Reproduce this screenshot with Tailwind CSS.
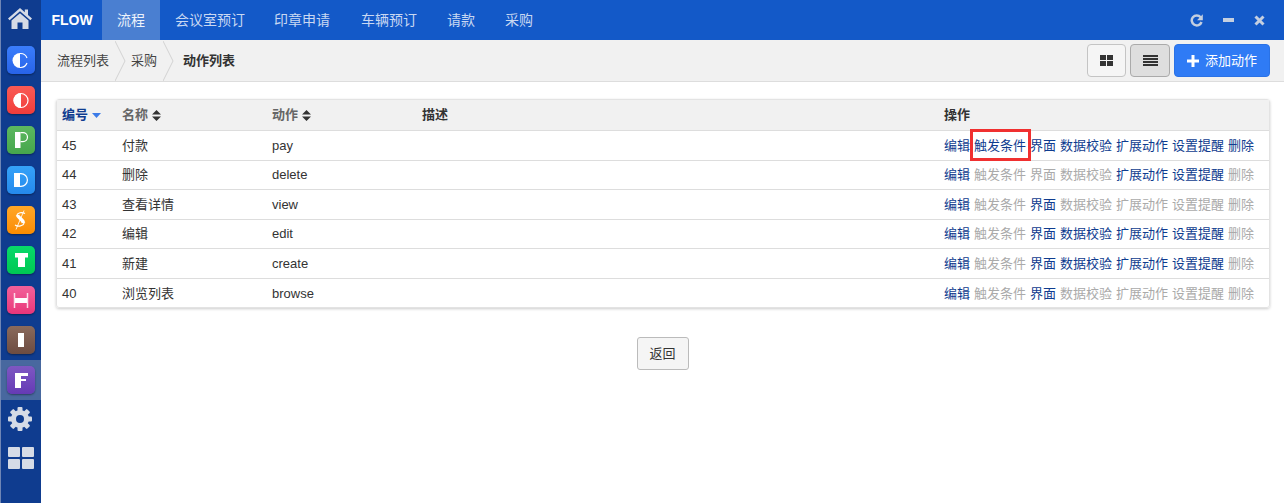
<!DOCTYPE html>
<html lang="zh-CN">
<head>
<meta charset="UTF-8">
<title>FLOW</title>
<script src="https://cdn.jsdelivr.net/npm/@tailwindcss/browser@4"></script>
</head>
<body class="bg-white font-['Liberation_Sans','Noto_Sans_CJK_SC',sans-serif] text-[13px] text-[#333]">
<div class="flex h-[503px] w-[1284px] overflow-hidden">
  <!-- sidebar -->
  <aside class="w-[41px] shrink-0 bg-[#0f3c8f] border-l border-[#6f86b5] flex flex-col">
    <div class="h-[46px] flex items-start justify-center pt-[8px] pr-[2px]">
      <svg width="24" height="21" viewBox="0 0 24 21"><path d="M12 0 L0 10.500 L1.600 12.300 L12 3.300 L22.400 12.300 L24 10.500 L20 7 V1.500 H16.800 V4.200 Z" fill="#d5dbe6"/><path d="M12 5.200 L3.500 12.500 V21 H9.500 V14.500 H14.500 V21 H20.500 V12.500 Z" fill="#d5dbe6"/></svg>
    </div>
    <div class="flex flex-col">
      <div class="h-[40px] pl-[6px]"><div class="w-[28px] h-[28px] rounded-[5px] bg-linear-to-b from-[#3a7dfc] to-[#2863e8] shadow-[0_1px_2px_rgba(0,0,0,.4)]">
        <svg width="28" height="28" viewBox="0 0 28 28"><path d="M13 7 A7.500 7.500 0 0 0 13 22 Z" fill="#fff"/><path d="M13 7.500 A7 7 0 0 1 20 12 M20 17 A7 7 0 0 1 13 21.500" fill="none" stroke="#fff" stroke-width="1.200"/></svg>
      </div></div>
      <div class="h-[40px] pl-[6px]"><div class="w-[28px] h-[28px] rounded-[5px] bg-linear-to-b from-[#f95a55] to-[#f13c3a] shadow-[0_1px_2px_rgba(0,0,0,.4)]">
        <svg width="28" height="28" viewBox="0 0 28 28"><path d="M14 7 A7.500 7.500 0 0 0 14 22 Z" fill="#fff"/><circle cx="14" cy="14.500" r="7" fill="none" stroke="#fff" stroke-width="1.200"/></svg>
      </div></div>
      <div class="h-[40px] pl-[6px]"><div class="w-[28px] h-[28px] rounded-[5px] bg-linear-to-b from-[#5cb860] to-[#46a64c] shadow-[0_1px_2px_rgba(0,0,0,.4)]">
        <svg width="28" height="28" viewBox="0 0 28 28"><path d="M8 6 H13.500 V22 H8 Z" fill="#fff"/><path d="M13.500 6.600 H16 A4.500 4.500 0 0 1 16 15.600 H13.500" fill="none" stroke="#fff" stroke-width="1.200"/></svg>
      </div></div>
      <div class="h-[40px] pl-[6px]"><div class="w-[28px] h-[28px] rounded-[5px] bg-linear-to-b from-[#35a2f8] to-[#2589ec] shadow-[0_1px_2px_rgba(0,0,0,.4)]">
        <svg width="28" height="28" viewBox="0 0 28 28"><path d="M7 7 H13 V21 H7 Z" fill="#fff"/><path d="M13 7.600 H14 A6.400 6.400 0 0 1 14 20.400 H13" fill="none" stroke="#fff" stroke-width="1.200"/></svg>
      </div></div>
      <div class="h-[40px] pl-[6px]"><div class="w-[28px] h-[28px] rounded-[5px] bg-linear-to-b from-[#ffa726] to-[#fb8c00] shadow-[0_1px_2px_rgba(0,0,0,.4)]">
        <svg width="28" height="28" viewBox="0 0 28 28" fill="none" stroke="#fff"><path d="M10.500 9 C11 12 16 13 16.500 17" stroke-width="3.500"/><path d="M10 9 C10.500 6.500 15 6 18 7.500" stroke-width="1.200"/><path d="M17 17 C16.500 20 11 21 8 19" stroke-width="1.200"/><path d="M17 4.500 L9 23.500" stroke-width=".8"/></svg>
      </div></div>
      <div class="h-[40px] pl-[6px]"><div class="w-[28px] h-[28px] rounded-[5px] bg-linear-to-b from-[#08d96a] to-[#00c853] shadow-[0_1px_2px_rgba(0,0,0,.4)]">
        <svg width="28" height="28" viewBox="0 0 28 28"><path d="M8 7 H21 V11.500 H18 V21 H11 V11.500 H8 Z" fill="#fff"/></svg>
      </div></div>
      <div class="h-[40px] pl-[6px]"><div class="w-[28px] h-[28px] rounded-[5px] bg-linear-to-b from-[#f2609a] to-[#e9357a] shadow-[0_1px_2px_rgba(0,0,0,.4)]">
        <svg width="28" height="28" viewBox="0 0 28 28"><path d="M7.500 7 V22 M20.500 7 V22" stroke="#fff" stroke-opacity=".8" stroke-width="1.500"/><path d="M8 12 H20 V17 H8 Z" fill="#fff"/></svg>
      </div></div>
      <div class="h-[34px] pl-[6px]"><div class="w-[28px] h-[28px] rounded-[5px] bg-linear-to-b from-[#8a6a5c] to-[#6d4c41] shadow-[0_1px_2px_rgba(0,0,0,.4)] flex items-center justify-center"><div class="w-[6px] h-[14px] bg-white"></div></div></div>
      <div class="h-[40px] pl-[6px] pt-[6px] bg-[#48689f]"><div class="w-[28px] h-[28px] rounded-[5px] bg-linear-to-b from-[#7e57c2] to-[#653ab5] shadow-[0_1px_2px_rgba(0,0,0,.4)]">
        <svg width="28" height="28" viewBox="0 0 28 28"><path d="M8 7 H21 V10 H14 V13 H19 V15 H14 V22 H8 Z" fill="#fff"/></svg>
      </div></div>
      <div class="h-[40px] flex items-center justify-center pr-[2px] pb-[2px]">
        <svg width="24" height="24" viewBox="0 0 24 24">
          <g fill="#d5dbe6">
            <circle cx="12" cy="12" r="9"/>
            <rect x="9.500" y="0" width="5" height="24" rx="1"/>
            <rect x="9.500" y="0" width="5" height="24" rx="1" transform="rotate(45 12 12)"/>
            <rect x="9.500" y="0" width="5" height="24" rx="1" transform="rotate(90 12 12)"/>
            <rect x="9.500" y="0" width="5" height="24" rx="1" transform="rotate(135 12 12)"/>
          </g>
          <circle cx="12" cy="12" r="4" fill="#0f3c8f"/>
        </svg>
      </div>
      <div class="h-[40px] flex items-center justify-center pr-[1px] pb-[4px]">
        <div class="grid grid-cols-[12px_12px] grid-rows-[10px_10px] gap-[2px]">
          <div class="bg-[#d5dbe6] rounded-[1px]"></div><div class="bg-[#d5dbe6] rounded-[1px]"></div><div class="bg-[#d5dbe6] rounded-[1px]"></div><div class="bg-[#d5dbe6] rounded-[1px]"></div>
        </div>
      </div>
    </div>
  </aside>

  <div class="flex-1 flex flex-col min-w-0">
    <!-- top nav -->
    <header class="h-[40px] shrink-0 bg-[#1359c8] text-[14px] text-[#c9d8f2] flex items-stretch">
      <div class="w-[61px] flex items-center justify-center font-bold text-white pl-[1px]">FLOW</div>
      <nav class="flex">
        <a class="w-[58px] flex items-center justify-center bg-[#4a7fd1] text-[#eef3fb]">流程</a>
        <a class="w-[100px] flex items-center justify-center">会议室预订</a>
        <a class="w-[86px] flex items-center justify-center -ml-[1px]">印章申请</a>
        <a class="w-[86px] flex items-center justify-center ml-[1px]">车辆预订</a>
        <a class="w-[58px] flex items-center justify-center">请款</a>
        <a class="w-[58px] flex items-center justify-center">采购</a>
      </nav>
      <div class="ml-auto flex items-center gap-[19px] pr-[19px]">
        <svg width="13" height="13" viewBox="0 0 13 13"><path d="M10.600 3.200 A5 5 0 1 0 11.500 8" fill="none" stroke="#c4cfe0" stroke-width="2.500"/><path d="M12.800 .200 V6.200 H7 Z" fill="#c4cfe0"/></svg>
        <div class="w-[11px] h-[4px] bg-[#c4cfe0] mx-[1px]"></div>
        <svg width="11" height="11" viewBox="0 0 11 11"><path d="M1.500 1.500 L9.500 9.500 M9.500 1.500 L1.500 9.500" stroke="#c4cfe0" stroke-width="3"/></svg>
      </div>
    </header>

    <!-- breadcrumb -->
    <div class="h-[42px] shrink-0 bg-[#f1f1f1] border-b border-[#ddd] flex items-center justify-between pr-[14px]">
      <div class="flex items-center h-full">
        <span class="pl-[16px] text-[#444]">流程列表</span>
        <svg class="ml-[6px]" width="11" height="40" viewBox="0 0 11 40"><path d="M0 0 L10 20 L0 40" fill="none" stroke="#d2d2d2"/></svg>
        <span class="ml-[5px] text-[#444]">采购</span>
        <svg class="ml-[6px]" width="11" height="40" viewBox="0 0 11 40"><path d="M0 0 L10 20 L0 40" fill="none" stroke="#d2d2d2"/></svg>
        <span class="ml-[9px] font-bold text-[#333]">动作列表</span>
      </div>
      <div class="flex items-center gap-[4px]">
        <button class="w-[39px] h-[33px] rounded-[4px] border border-[#c4c4c4] bg-[#f5f5f5] flex items-center justify-center">
          <svg width="13" height="11" viewBox="0 0 13 11"><path d="M0 0 H6 V5 H0 Z M7 0 H13 V5 H7 Z M0 6 H6 V11 H0 Z M7 6 H13 V11 H7 Z" fill="#333"/></svg>
        </button>
        <button class="w-[40px] h-[33px] rounded-[4px] border border-[#aaa] bg-[#dedede] flex items-center justify-center">
          <svg width="15" height="11" viewBox="0 0 15 11"><path d="M0 0 H15 V2 H0 Z M0 3 H15 V5 H0 Z M0 6 H15 V8 H0 Z M0 9 H15 V11 H0 Z" fill="#333"/></svg>
        </button>
        <button class="w-[96px] h-[33px] rounded-[4px] bg-[#2f7bf5] border border-[#2a72e6] text-white flex items-center justify-center gap-[6px]">
          <svg width="12" height="12" viewBox="0 0 12 12"><path d="M4.500 0 H7.500 V4.500 H12 V7.500 H7.500 V12 H4.500 V7.500 H0 V4.500 H4.500 Z" fill="#fff"/></svg>
          <span>添加动作</span>
        </button>
      </div>
    </div>

    <!-- table -->
    <main class="pl-[15px] pr-[14px] pt-[17px]">
      <div class="rounded-[3px] border border-[#e3e3e3] shadow-[0_1px_3px_rgba(0,0,0,.2)]">
        <div class="grid grid-cols-[60px_150px_150px_522px_1fr] h-[31px] items-center bg-[#f1f1f1] border-b border-[#ddd] font-bold pl-[5px]">
          <div class="flex items-center gap-[4px] text-[#0f3c8f]">编号<svg width="9" height="5" viewBox="0 0 9 5"><path d="M0 0 H9 L4.500 5 Z" fill="#3c7be8"/></svg></div>
          <div class="flex items-center gap-[4px] text-[#666]">名称<svg width="9" height="11" viewBox="0 0 9 11"><path d="M0 4.500 L4.500 0 L9 4.500 Z M0 6.500 H9 L4.500 11 Z" fill="#333"/></svg></div>
          <div class="flex items-center gap-[4px] text-[#666]">动作<svg width="9" height="11" viewBox="0 0 9 11"><path d="M0 4.500 L4.500 0 L9 4.500 Z M0 6.500 H9 L4.500 11 Z" fill="#333"/></svg></div>
          <div>描述</div>
          <div>操作</div>
        </div>

        <div class="grid grid-cols-[60px_150px_150px_522px_1fr] h-[30px] items-center border-b border-[#ddd] pl-[5px]">
          <div>45</div><div>付款</div><div>pay</div><div></div>
          <div class="flex gap-[4px] text-[#0f3c8f] whitespace-nowrap">
            <a>编辑</a><a class="relative">触发条件<span class="absolute -left-[4px] -right-[5px] -top-[7px] -bottom-[6px] border-[3px] border-[#f03030]"></span></a><a>界面</a><a>数据校验</a><a>扩展动作</a><a>设置提醒</a><a>删除</a>
          </div>
        </div>
        <div class="grid grid-cols-[60px_150px_150px_522px_1fr] h-[29px] items-center border-b border-[#ddd] pl-[5px]">
          <div>44</div><div>删除</div><div>delete</div><div></div>
          <div class="flex gap-[4px] text-[#aaa] whitespace-nowrap">
            <a class="text-[#0f3c8f]">编辑</a><a>触发条件</a><a>界面</a><a>数据校验</a><a class="text-[#0f3c8f]">扩展动作</a><a class="text-[#0f3c8f]">设置提醒</a><a>删除</a>
          </div>
        </div>
        <div class="grid grid-cols-[60px_150px_150px_522px_1fr] h-[30px] items-center border-b border-[#ddd] pl-[5px]">
          <div>43</div><div>查看详情</div><div>view</div><div></div>
          <div class="flex gap-[4px] text-[#aaa] whitespace-nowrap">
            <a class="text-[#0f3c8f]">编辑</a><a>触发条件</a><a class="text-[#0f3c8f]">界面</a><a>数据校验</a><a>扩展动作</a><a>设置提醒</a><a>删除</a>
          </div>
        </div>
        <div class="grid grid-cols-[60px_150px_150px_522px_1fr] h-[29px] items-center border-b border-[#ddd] pl-[5px]">
          <div>42</div><div>编辑</div><div>edit</div><div></div>
          <div class="flex gap-[4px] text-[#0f3c8f] whitespace-nowrap">
            <a>编辑</a><a class="text-[#aaa]">触发条件</a><a>界面</a><a>数据校验</a><a>扩展动作</a><a>设置提醒</a><a class="text-[#aaa]">删除</a>
          </div>
        </div>
        <div class="grid grid-cols-[60px_150px_150px_522px_1fr] h-[30px] items-center border-b border-[#ddd] pl-[5px]">
          <div>41</div><div>新建</div><div>create</div><div></div>
          <div class="flex gap-[4px] text-[#0f3c8f] whitespace-nowrap">
            <a>编辑</a><a class="text-[#aaa]">触发条件</a><a>界面</a><a>数据校验</a><a>扩展动作</a><a>设置提醒</a><a class="text-[#aaa]">删除</a>
          </div>
        </div>
        <div class="grid grid-cols-[60px_150px_150px_522px_1fr] h-[28px] pt-[1px] items-center pl-[5px]">
          <div>40</div><div>浏览列表</div><div>browse</div><div></div>
          <div class="flex gap-[4px] text-[#aaa] whitespace-nowrap">
            <a class="text-[#0f3c8f]">编辑</a><a>触发条件</a><a class="text-[#0f3c8f]">界面</a><a>数据校验</a><a>扩展动作</a><a>设置提醒</a><a>删除</a>
          </div>
        </div>
      </div>

      <div class="flex justify-center mt-[29px] pr-[1px]">
        <button class="w-[52px] h-[33px] rounded-[3px] border border-[#bbb] bg-[#f5f5f5] text-[#333]">返回</button>
      </div>
    </main>
  </div>
</div>
</body>
</html>
